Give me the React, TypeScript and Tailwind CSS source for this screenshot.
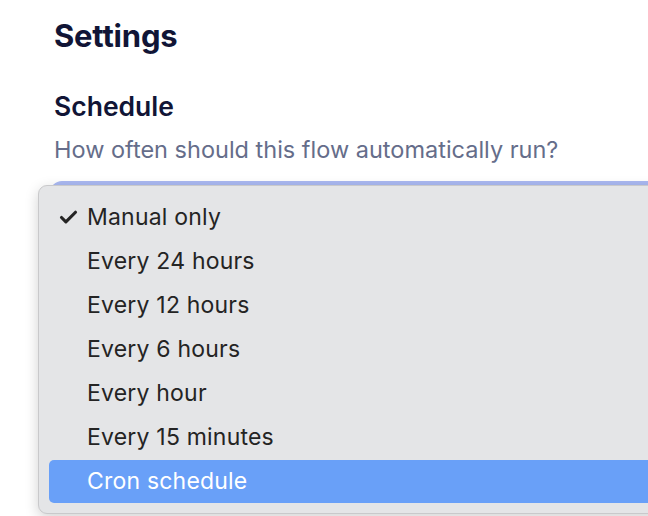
import { Check } from 'lucide-react'

const OPTIONS = [
  'Manual only',
  'Every 24 hours',
  'Every 12 hours',
  'Every 6 hours',
  'Every hour',
  'Every 15 minutes',
  'Cron schedule',
]

export default function App() {
  const selected = 'Manual only'
  const hovered = 'Cron schedule'

  return (
    <div className="relative h-[516px] w-[648px] overflow-hidden bg-white font-['Inter',sans-serif]">
      <div className="pl-[54px] pt-[16px]">
        <h2 className="text-[31px] font-bold leading-[40px] tracking-[-0.2px] text-[#111536]">Settings</h2>

        <h3 className="mt-[33px] text-[26.5px] font-semibold leading-[34px] text-[#111536]">Schedule</h3>
        <p className="mt-[12px] text-[23.5px] leading-[30px] text-[#656d8a]">
          How often should this flow automatically run?
        </p>

        <div className="mt-[20px] h-[46px] w-[640px] rounded-lg border border-[#cbd5e1] bg-white ring-4 ring-[#aab9f2]" />

        <h3 className="mt-[280px] text-[22px] font-bold uppercase leading-[28px] text-[#111536]">Delete runs</h3>
      </div>

      {/* native select popup */}
      <div className="absolute left-[38px] top-[185px] w-[640px] rounded-[9px] border border-[#c9c9cb] bg-[#e4e5e7] px-[10px] pt-[10px] pb-[10px] shadow-[0_4px_14px_rgba(0,0,0,0.18)] font-['Inter',sans-serif]">
        <ul className="flex flex-col gap-[1px]">
          {OPTIONS.map((opt) => {
            const active = opt === hovered
            return (
              <li
                key={opt}
                className={`flex h-[43px] items-center rounded-[5px] pl-[9px] text-[23px] tracking-[0.2px] ${
                  active ? 'bg-[#69a0f8] text-white' : 'text-[#242424]'
                }`}
              >
                <span className="flex w-[29px] items-center">
                  {opt === selected && <Check className="h-[21px] w-[21px]" strokeWidth={3.6} />}
                </span>
                {opt}
              </li>
            )
          })}
        </ul>
      </div>
    </div>
  )
}
